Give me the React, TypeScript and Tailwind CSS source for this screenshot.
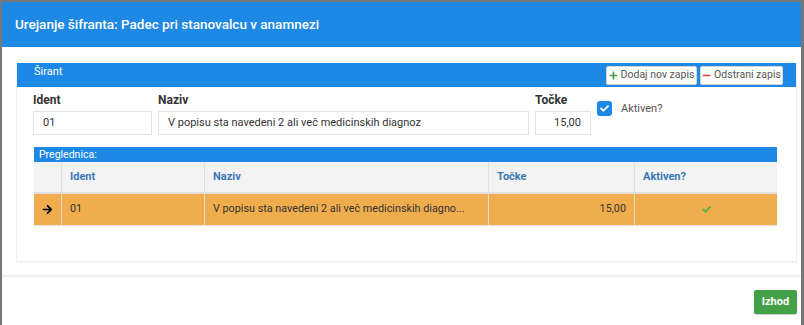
import { FaPlus, FaMinus, FaArrowRight, FaCheck } from 'react-icons/fa';

const cols = [
  { key: 'arrow', label: '', w: 'w-[27px]' },
  { key: 'ident', label: 'Ident', w: 'w-[143px]' },
  { key: 'naziv', label: 'Naziv', w: 'w-[284px]' },
  { key: 'tocke', label: 'Točke', w: 'w-[146px]' },
  { key: 'aktiven', label: 'Aktiven?', w: 'flex-1' },
];

const Field = ({ label, value, width, right }: { label: string; value: string; width: string; right?: boolean }) => (
  <div className={`flex flex-col ${width}`}>
    <label className="h-[15px] text-[12px] leading-[15px] font-bold text-[#333]">{label}</label>
    <div
      className={`mt-[3px] flex h-[24px] items-center border border-[#dfe3e8] px-[9px] text-[11px] text-[#333] ${
        right ? 'justify-end' : ''
      }`}
    >
      {value}
    </div>
  </div>
);

export default function App() {
  return (
    <div className="h-[325px] w-[804px] overflow-hidden bg-[#777] pt-[2px] pl-[2px] font-['Roboto',sans-serif]">
      <div className="h-[323px] w-[799px] bg-white">
        {/* header */}
        <div className="flex h-[45px] items-center bg-[#1e88e5] px-[13px] text-[13.5px] font-medium text-white">
          Urejanje šifranta: Padec pri stanovalcu v anamnezi
        </div>

        <div className="pt-[16px] pr-[4px] pl-[14px]">
          <div className="h-[199px] border border-t-0 border-[#f0f0f0] shadow-[0_1px_1px_rgba(0,0,0,0.04)]">
            <div className="flex h-[24px] items-center justify-between bg-[#1e88e5] pr-[13px] pl-[17px]">
              <span className="-mt-[6px] text-[11px] text-white">Širant</span>
              <div className="flex gap-[3px]">
                <button className="flex h-[19px] w-[91px] items-center justify-center gap-[3px] rounded-[2px] border border-[#d5d5d5] bg-white text-[10.5px] whitespace-nowrap text-[#555]">
                  <FaPlus className="h-[9px] w-[9px] shrink-0 text-[#43a047]" />
                  Dodaj nov zapis
                </button>
                <button className="flex h-[19px] w-[83px] items-center justify-center gap-[3px] rounded-[2px] border border-[#d5d5d5] bg-white text-[10.5px] whitespace-nowrap text-[#555]">
                  <FaMinus className="h-[9px] w-[9px] shrink-0 text-[#e53935]" />
                  Odstrani zapis
                </button>
              </div>
            </div>

            <div className="flex gap-[6px] pt-[6px] pl-[16px]">
              <Field label="Ident" value="01" width="w-[119px]" />
              <Field label="Naziv" value="V popisu sta navedeni 2 ali več medicinskih diagnoz" width="w-[371px]" />
              <Field label="Točke" value="15,00" width="w-[56px]" right />
              <div className="flex items-start gap-[9px] pt-[8px]">
                <span className="flex h-[15px] w-[15px] items-center justify-center rounded-[3px] bg-[#1e88e5]">
                  <FaCheck className="h-[9px] w-[9px] text-white" />
                </span>
                <span className="text-[11px] leading-[15px] text-[#555]">Aktiven?</span>
              </div>
            </div>

            <div className="mt-[12px] mr-[19px] ml-[17px]">
              <div className="flex h-[15px] items-center bg-[#1e88e5] px-[5px] text-[10.5px] text-white">Preglednica:</div>
              <div className="flex h-[32px] border-b-[2px] border-[#e0e0e0] bg-[#f3f3f3]">
                {cols.map((c) => (
                  <div
                    key={c.key}
                    className={`${c.w} flex items-center border-l border-[#e0e0e0] px-[8px] text-[11px] font-bold text-[#3b77b5] first:border-l-0`}
                  >
                    {c.label}
                  </div>
                ))}
              </div>
              <div className="flex h-[32px] border-b border-[#e0e0e0] bg-[#f0ad4e] text-[10.8px] text-[#333]">
                <div className="flex w-[27px] items-center justify-center">
                  <FaArrowRight className="h-[11px] w-[11px] text-black" />
                </div>
                <div className="flex w-[143px] items-center border-l border-[#e0e0e0] px-[8px]">01</div>
                <div className="flex w-[284px] items-center border-l border-[#e0e0e0] px-[8px]">
                  V popisu sta navedeni 2 ali več medicinskih diagno...
                </div>
                <div className="flex w-[146px] items-center justify-end border-l border-[#e0e0e0] px-[8px]">15,00</div>
                <div className="flex flex-1 items-center justify-center border-l border-[#e0e0e0]">
                  <FaCheck className="h-[9px] w-[9px] text-[#4caf50]" />
                </div>
              </div>
            </div>
          </div>
        </div>

        {/* footer */}
        <div className="mt-[13px] border-t-[2px] border-[#eeeeee]">
          <div className="flex justify-end pt-[13px] pr-[4px]">
            <button className="h-[24px] w-[43px] rounded-[2px] bg-[#43a047] text-[11px] font-bold text-white shadow-[0_1px_1px_rgba(0,0,0,0.2)]">
              Izhod
            </button>
          </div>
        </div>
      </div>
    </div>
  );
}
